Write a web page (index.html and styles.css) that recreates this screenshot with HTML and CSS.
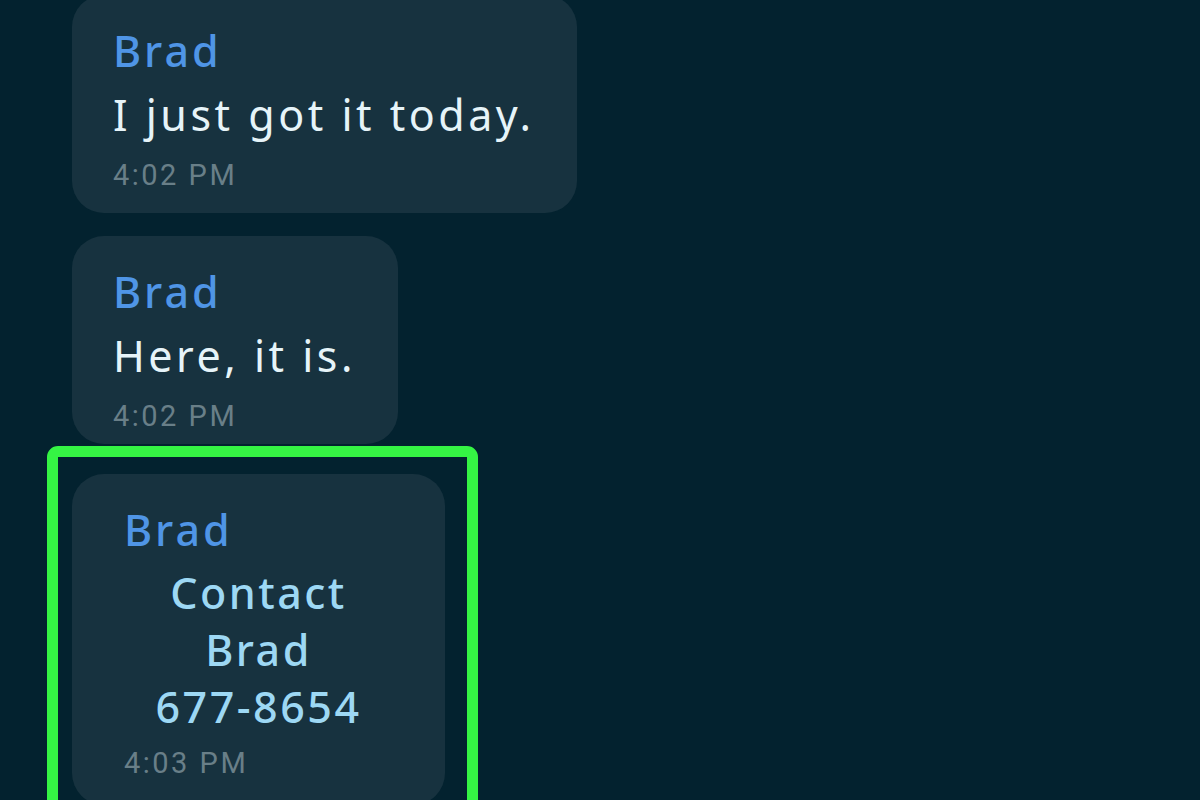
FILE: index.html
```html
<!DOCTYPE html>
<html lang="en">
<head>
	<meta charset="UTF-8">
	<title>Chat</title>
	<link rel="stylesheet" href="styles.css">
</head>
<body>
	<div id="chat">
		<div class="msg msg-first">
			<div class="sender">Brad</div>
			<div class="text">I just got it today.</div>
			<div class="time">4:02 PM</div>
		</div>

		<div class="msg">
			<div class="sender">Brad</div>
			<div class="text">Here, it is.</div>
			<div class="time">4:02 PM</div>
		</div>

		<div class="highlight">
			<div class="msg contact">
				<div class="sender">Brad</div>
				<div class="card">
					<div>Contact</div>
					<div>Brad</div>
					<div>677-8654</div>
				</div>
				<div class="time">4:03 PM</div>
			</div>
		</div>
	</div>
</body>
</html>
```

FILE: styles.css
```css
html, body {
	margin: 0;
	height: 100%;
	overflow: hidden;
	background-color: #03222f;
}
#chat {
	display: flex;
	flex-direction: column;
	align-items: flex-start;
	gap: 23px;
	padding-left: 72px;
	margin-top: -5px;
	font-family: "Noto Sans", sans-serif;
}
.msg {
	background-color: #17323f;
	border-radius: 32px;
	padding: 24px 42px 0 41px;
}
.msg-first {
	padding-bottom: 10px;
}
.sender {
	font-size: 43px;
	line-height: 64px;
	font-weight: 500;
	letter-spacing: 3px;
	color: #4f95e6;
}
.text {
	font-size: 43px;
	line-height: 64px;
	letter-spacing: 3.5px;
	color: #e6f4f9;
}
.time {
	font-family: Roboto, sans-serif;
	font-size: 29px;
	line-height: 56px;
	letter-spacing: 2.5px;
	color: #697f88;
}

/* selected message */
.highlight {
	margin-top: -21px;
	margin-left: -25px;
	padding: 17px 22px 20px 14px;
	border: 11px solid #35f444;
	border-radius: 11px;
}
.contact {
	width: 373px;
	box-sizing: border-box;
	padding: 24px 0 14px 52px;
}
.card {
	margin: 2px 0 0 -52px;
	text-align: center;
	font-size: 43px;
	line-height: 57px;
	font-weight: 500;
	letter-spacing: 2.5px;
	color: #9dd8f4;
}
```
